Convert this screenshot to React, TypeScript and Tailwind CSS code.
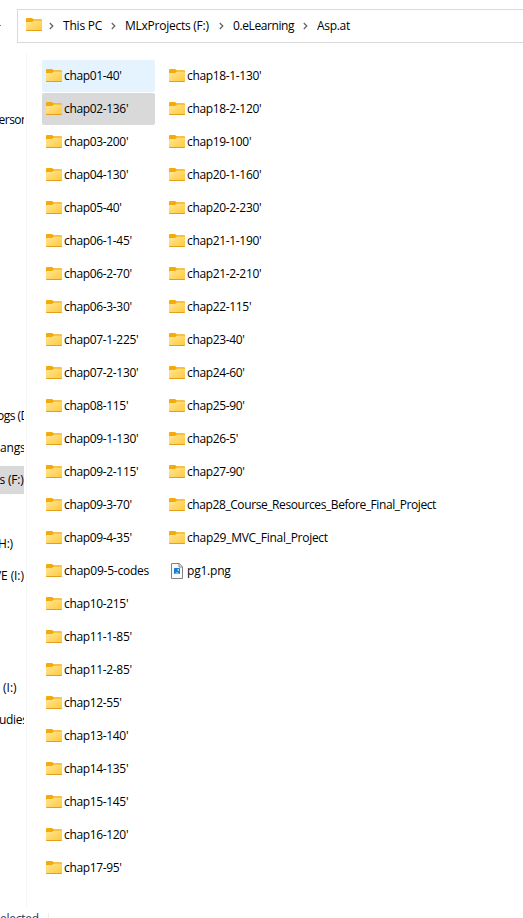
import { ReactNode } from 'react';

const firstColumn = [
  "chap01-40'",
  "chap02-136'",
  "chap03-200'",
  "chap04-130'",
  "chap05-40'",
  "chap06-1-45'",
  "chap06-2-70'",
  "chap06-3-30'",
  "chap07-1-225'",
  "chap07-2-130'",
  "chap08-115'",
  "chap09-1-130'",
  "chap09-2-115'",
  "chap09-3-70'",
  "chap09-4-35'",
  'chap09-5-codes',
  "chap10-215'",
  "chap11-1-85'",
  "chap11-2-85'",
  "chap12-55'",
  "chap13-140'",
  "chap14-135'",
  "chap15-145'",
  "chap16-120'",
  "chap17-95'",
];

const secondColumn = [
  "chap18-1-130'",
  "chap18-2-120'",
  "chap19-100'",
  "chap20-1-160'",
  "chap20-2-230'",
  "chap21-1-190'",
  "chap21-2-210'",
  "chap22-115'",
  "chap23-40'",
  "chap24-60'",
  "chap25-90'",
  "chap26-5'",
  "chap27-90'",
  'chap28_Course_Resources_Before_Final_Project',
  'chap29_MVC_Final_Project',
];

const tracking: Record<string, string> = {
  'chap09-5-codes': 'tracking-[-0.22px]',
  'chap28_Course_Resources_Before_Final_Project': 'tracking-[-0.41px]',
  'chap29_MVC_Final_Project': 'tracking-[-0.28px]',
  'pg1.png': 'tracking-[-0.2px]',
};

function FolderIcon() {
  return (
    <svg width="16" height="16" viewBox="0 0 16 16" className="shrink-0">
      <defs>
        <linearGradient id="folder" x1="0" y1="0" x2="1" y2="1">
          <stop offset="0" stopColor="#ffe699" />
          <stop offset="1" stopColor="#ffc937" />
        </linearGradient>
      </defs>
      <path d="M0 2Q0 1 1 1H5.8Q6.4 1 6.8 1.4L7.6 2.2H15Q16 2.2 16 3.2V8H0Z" fill="#f3ab0c" />
      <path d="M0 6Q0 5 1 5H5.9Q6.4 5 6.8 4.6L7.4 3.9Q7.7 3.6 8.1 3.6H15.2Q16 3.6 16 4.5V13Q16 14 15 14H1Q0 14 0 13Z" fill="url(#folder)" />
      <path d="M0 12.6Q.2 13.1 1 13.1H15Q15.8 13.1 16 12.6V13Q16 14 15 14H1Q0 14 0 13Z" fill="#e2a01c" />
    </svg>
  );
}

function ImageFileIcon() {
  return (
    <svg width="16" height="16" viewBox="0 0 16 16" className="shrink-0">
      <path d="M2.5 .5H10.2L13.5 3.8V15.5H2.5Z" fill="#fafafa" stroke="#828282" />
      <path d="M10 .5V4H13.5" fill="none" stroke="#828282" />
      <rect x="5" y="5" width="6" height="6" rx=".6" fill="#1a7bd4" />
      <path d="M5.4 11L8 8.4L10.6 11Z" fill="#64c3f5" />
      <circle cx="9.3" cy="6.9" r=".8" fill="#fff" />
    </svg>
  );
}

function FileRow({ icon, name, className = '' }: { icon: ReactNode; name: string; className?: string }) {
  return (
    <div className={`flex h-8 items-center gap-[2px] rounded-[2px] pl-1 ${className}`}>
      {icon}
      <span className={tracking[name] ?? 'tracking-[-0.34px]'}>{name}</span>
    </div>
  );
}

function Chevron() {
  return (
    <svg width="5" height="8" viewBox="0 0 5 8" className="shrink-0">
      <path d="M.8 1L3.8 4L.8 7" fill="none" stroke="#666" strokeWidth="1.3" />
    </svg>
  );
}

function AddressBar() {
  return (
    <header className="flex h-[54px] shrink-0 pt-[9px]">
      <div className="w-[17px] shrink-0 pt-4">
        <div className="h-px w-px bg-[#777]" />
      </div>
      <div className="flex h-[34px] flex-1 items-center border border-r-0 border-[#d9d9d9] pl-2">
        <div className="pb-[2px]">
          <FolderIcon />
        </div>
        <div className="ml-[7px] flex items-center">
          <Chevron />
          <span className="ml-[9px] w-[48px] tracking-[-0.2px]">This PC</span>
          <Chevron />
          <span className="ml-[9px] w-[94px] tracking-[-0.25px]">MLxProjects (F:)</span>
          <Chevron />
          <span className="ml-[9px] w-[70px] tracking-[-0.4px]">0.eLearning</span>
          <Chevron />
          <span className="ml-[9px] tracking-[-0.3px]">Asp.at</span>
        </div>
      </div>
    </header>
  );
}

function TreeItem({ name, className = 'tracking-[-0.2px]' }: { name: string; className?: string }) {
  return (
    <div className="flex h-8 items-center">
      <div className={`h-7 w-full leading-7 ${className}`}>{name}</div>
    </div>
  );
}

function NavigationTree() {
  return (
    <nav className="w-6 shrink-0 overflow-hidden pt-[50px]">
      <TreeItem name="erson" className="-indent-[1.5px] tracking-[-0.5px]" />
      <div className="h-[264px]" />
      <TreeItem name="ogs (D:)" className="-indent-[3px] tracking-[-0.5px]" />
      <TreeItem name="angs" />
      <TreeItem name="s (F:)" className="-indent-[0.5px] bg-[#d9d9d9] tracking-[-0.2px]" />
      <div className="h-8" />
      <TreeItem name="H:)" className="-indent-[2px] tracking-[-0.2px]" />
      <TreeItem name="VE (I:)" className="-indent-[6px] tracking-[-0.1px]" />
      <div className="h-20" />
      <TreeItem name="(I:)" className="pl-[3px]" />
      <TreeItem name="udies" className="-indent-px tracking-[-0.3px]" />
    </nav>
  );
}

export default function App() {
  return (
    <div className="flex h-[918px] w-[523px] flex-col overflow-hidden bg-white font-['Open_Sans','Noto_Sans',sans-serif] text-[12px] leading-4 whitespace-nowrap text-black">
      <AddressBar />
      <main className="flex h-[853px] shrink-0">
        <NavigationTree />
        <div className="ml-[2px] w-px bg-[#f5f5f5]" />
        <div className="flex pt-[6px] pl-[15px]">
          <div className="flex w-[113px] flex-col gap-px">
            {firstColumn.map((name, i) => (
              <FileRow
                key={name}
                icon={<FolderIcon />}
                name={name}
                className={i === 0 ? 'bg-[#e5f3ff]' : i === 1 ? 'bg-[#d9d9d9]' : ''}
              />
            ))}
          </div>
          <div className="ml-[10px] flex flex-col gap-px">
            {secondColumn.map((name) => (
              <FileRow key={name} icon={<FolderIcon />} name={name} />
            ))}
            <FileRow icon={<ImageFileIcon />} name="pg1.png" />
          </div>
        </div>
      </main>
      <footer className="flex shrink-0 pt-1 text-[#28324a]">
        <span className="w-12 tracking-[-0.25px]">elected</span>
        <div className="mt-[2px] h-4 w-px bg-[#eee]" />
      </footer>
    </div>
  );
}
